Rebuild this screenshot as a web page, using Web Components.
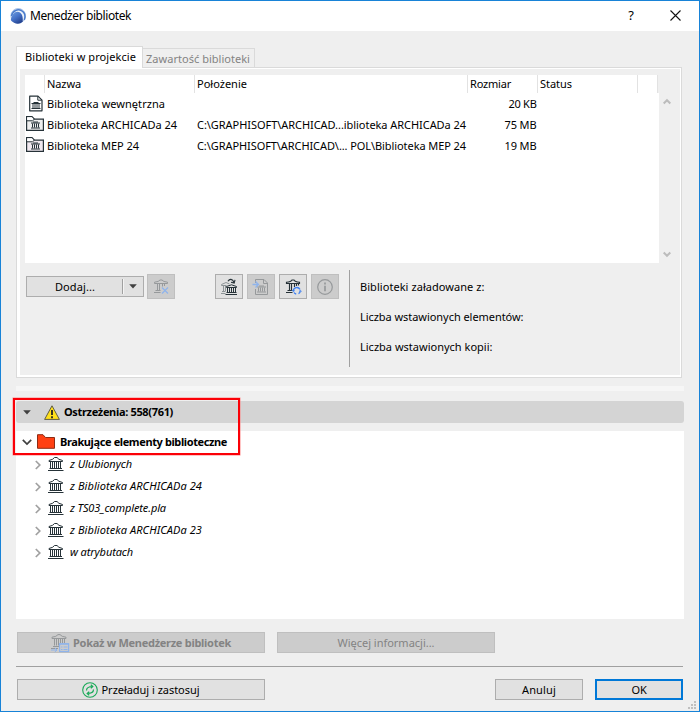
<!DOCTYPE html>
<html lang="pl">
<head>
<meta charset="utf-8">
<title>Menedżer bibliotek</title>
<style>
html,body{margin:0;padding:0;background:#efefef}
body{width:700px;height:712px;overflow:hidden;font:11px "Noto Sans","Open Sans",sans-serif;color:#000}
</style>
</head>
<body>
<library-manager></library-manager>
<script>
const define=(name,html,setup)=>{
  const t=document.createElement('template');
  t.innerHTML=html;
  customElements.define(name,class extends HTMLElement{
    connectedCallback(){
      if(this.shadowRoot)return;
      this.attachShadow({mode:'open'}).append(t.content.cloneNode(true));
      if(setup)setup(this,this.shadowRoot);
    }
  });
};

/* Label tracked to a given width (attribute w, in px). */
define('fit-text',`<style>:host{display:inline-block;white-space:pre;flex:none}span{display:inline-block}</style><span><slot></slot></span>`,(el,root)=>{
  const w=+el.getAttribute('w'),s=root.querySelector('span'),n=el.textContent.length;
  if(!w||!n)return;
  const nat=s.getBoundingClientRect().width;
  s.style.letterSpacing=((w-nat)/n)+'px';
  el.style.width=w+'px';
});

const bank='<path d="M1 4.500V3.500Q5.500 2.500 6.500.5h2.500Q10 2.500 14.500 3.500v1z" fill="none"/><path d="M2.500 4.500v6.500M4.500 4.500v6.500M6.500 4.500v6.500M8.500 4.500v6.500M10.500 4.500v6.500M12.500 4.500v6.500M1.500 11.500h12.500M0 13.500h15.500"/>';
const miniBank='<path d="M0 2.500h9M2 1.500h5M1.500 3v4M3.500 3v4M5.500 3v4M7.500 3v4M0 7.500h9" fill="none"/>';
const pillars='<path d="M1.500 4.500V3.200Q6 2.800 7 1h2q1 1.800 5.500 2.200v1.300zM4.500 4.500v7M6.500 4.500v7M1 13.500h6.500M2.500 11.500h5" fill="none"/>';
const lib=c=>[18,15,`<path d="M.6 14.400V.6H6l2.500 2.500h8.900V14.400z" fill="${c}" stroke="#263238" stroke-width="1.200"/><path d="M1.200 1.200h4.500l1.500 1.600-1 1.200h-5z" fill="#fff"/><path d="M.6 4.800H6.500l2-1.700" fill="none" stroke="#263238"/><g transform="translate(5 4.500)" stroke="#263238">${miniBank}</g>`];
const icons={
  app:[16,16,`<defs><linearGradient id="g" x1="0" y1="0" x2=".7" y2="1"><stop offset="0" stop-color="#6f9fe0"/><stop offset=".5" stop-color="#4774c9"/><stop offset="1" stop-color="#23418f"/></linearGradient></defs><circle cx="8.200" cy="7.800" r="7.300" fill="#eaf1fa" stroke="#8fb2e2" stroke-width=".8"/><path d="M1.500 8C2.500 2.500 8 .5 11.500 2.700c3.500 2 4 6 2.800 9.300" fill="none" stroke="#4a7bcb" stroke-width="1.500"/><path d="M.8 12C1.600 7 4.400 3.800 7.400 3.800c4 0 5.900 4.200 5.300 9.900A7.700 7.700 0 0 1 4 14.700C2.600 14 1.300 13 .8 12z" fill="url(#g)"/>`],
  bank:[16,14,`<g stroke="#263238">${bank}</g>`],
  file:[14,17,`<path d="M.7 1.200H9L13 5.200V15.800H.7z" fill="#fff" stroke="#263238" stroke-width="1.200" stroke-linejoin="round"/><path d="M8.800 1.200v4h4" fill="none" stroke="#263238"/><g transform="translate(2.500 6)" stroke="#263238">${miniBank}</g>`],
  lib:lib('#eee'),
  libPink:lib('#f0e8ef'),
  remove:[16,16,`<g stroke="#96999b">${pillars}<path d="M9.500 4.500v3M11.500 4.500v2.500"/></g><path d="M9 8.500l6 6m0-6l-6 6" stroke="#8fb4ec" stroke-width="1.200"/>`],
  copy:[16,16,`<g stroke="#8d9497" fill="none"><path d="M.5 6.500V5.500L5 3.500 8.500 5M.5 6.500h5M2.500 7v5.500M4.500 7v5.500M0 14.500h4.500M1 12.500h3"/></g><path d="M5.500 8.500V7.500L10.500 5.800l5 1.700v1z" fill="#e2e2e2" stroke="#263238"/><path d="M6.500 8.500v5M8.500 8.500v5M10.500 8.500v5M12.500 8.500v5M14.500 8.500v5M5.500 13.500h10M4.500 15.500h11.500" stroke="#263238"/><path d="M7 2.300C8.500-.4 11.500-.5 13 3.500M10 3.300l3.200.8.800-3.300" fill="none" stroke="#263238" stroke-width="1.100"/>`],
  import:[18,18,`<g stroke="#96999b" fill="none"><path d="M3.500 5V1.500h8.500L15.500 5V16.500H3.500V11M11.500 1.500v4h4"/><g transform="translate(5 6.500)">${miniBank}</g></g><path d="M.5 6.500h6M3.500 3.500l3 3-3 3" fill="none" stroke="#8fb4ec" stroke-width="1.300"/>`],
  reload:[16,16,`<g stroke="#263238" stroke-width="1.150">${pillars}<path d="M9.500 4.500v3.500M11.500 4.500v2.500M13.500 4.500v2"/></g><path d="M8.300 12a3.500 3.500 0 0 1 6.600-1.600M15.400 12.200a3.500 3.500 0 0 1-1.900 2.500M11.200 15a3.500 3.500 0 0 1-2.200-1.500" fill="none" stroke="#3d7ff0" stroke-width="1.300"/><path d="M7 11.300l1.300 1.400 1.500-1.200M14 12.500l1.400-1.300L16.500 12.500" fill="none" stroke="#3d7ff0" stroke-width=".9"/>`],
  info:[16,16,`<circle cx="8" cy="8" r="7.300" fill="none" stroke="#96999b" stroke-width="1.200"/><path d="M8 3.500v2M8 6.800v5.500" stroke="#96999b" stroke-width="1.700"/>`],
  warn:[16,15,`<path d="M8 .8L15.400 14.400H.6z" fill="#ffe01b" stroke="#5f5c45" stroke-linejoin="round"/><path d="M8 5v5M8 11.300v1.900" stroke="#222" stroke-width="1.800"/>`],
  folder:[18,15,`<path d="M.5 14.300V.7H6l2.500 2.800h9V14.300z" fill="#ff4013" stroke="#8d2b14"/>`],
  show:[18,18,`<g stroke="#96999b" fill="none"><path d="M1 4.500V3.200Q5.500 2.800 7 .6h2Q10.500 2.800 15 3.200v1.300zM3.500 4.500v7M5.500 4.500v7M7.500 4.500v7M9.500 4.500v4.500M11.500 4.500v4.500M13.500 4.500v4.500M2 12.500h6M0 14.500h7"/></g><rect x="8.600" y="9.700" width="9" height="7.800" fill="#ccc" stroke="#8fb4ec" stroke-width="1.200"/><path d="M8 10.200h10M10 13h1.500M12.500 13h4M10 15.500h1.500M12.500 15.500h4M0 16h6M3.800 13.800L6 16l-2.200 2" fill="none" stroke="#8fb4ec"/>`],
  refresh:[16,16,`<circle cx="8" cy="8" r="7.300" fill="none" stroke="#18a957" stroke-width="1.100"/><path d="M4.500 8.500c0-3 2-4 6.300-4M8.800 2.700l2 1.800-2 1.800M11.500 7.500c0 3-2 4-6.300 4M7.200 9.700l-2 1.800 2 1.800" fill="none" stroke="#18a957" stroke-width="1.200"/>`],
  caret:[8,5,`<path d="M.2.300h7.600L4 4.600z" fill="#404040"/>`],
  chevD:[10,6,`<path d="M.8.800L5 5 9.200.8" fill="none" stroke="#404040" stroke-width="1.700"/>`],
  chevR:[6,10,`<path d="M.8 1L4.800 5 .8 9" fill="none" stroke="#a0a0a0" stroke-width="1.700"/>`],
  up:[8,7,`<path d="M.7 5.500L4 2.200l3.300 3.300" fill="none" stroke="#bcbcbc" stroke-width="2"/>`],
  down:[8,7,`<path d="M.7 1.500L4 4.800l3.300-3.300" fill="none" stroke="#bcbcbc" stroke-width="2"/>`],
  close:[11,11,`<path d="M.5.500l10 10m0-10l-10 10" stroke="#111" stroke-width="1.100"/>`],
  grip:[9,9,`<path d="M6 0h2v2H6zM3 3h2v2H3zM6 3h2v2H6zM0 6h2v2H0zM3 6h2v2H3zM6 6h2v2H6z" fill="#bfbfbf"/>`]
};
define('ui-icon',`<style>:host{display:block;flex:none}svg{display:block;overflow:visible}</style><div></div>`,(el,root)=>{
  const [w,h,body]=icons[el.getAttribute('name')];
  root.querySelector('div').innerHTML=`<svg width="${w}" height="${h}" viewBox="0 0 ${w} ${h}">${body}</svg>`;
});

define('push-button',`<style>
:host{display:flex;box-sizing:border-box;align-items:center;justify-content:center;height:21px;border:1px solid #adadad;background:#e1e1e1;line-height:19px;flex:none}
:host([disabled]){background:#ccc;border-color:#bfbfbf;color:#838383}
:host([default]){border:2px solid #0078d7}
:host([square]){width:28px;height:25px}
</style><slot></slot>`);

define('title-bar',`<style>
:host{display:flex;height:30px;background:#fff;align-items:center;padding-left:9px;font-size:12px;line-height:16px}
.t{margin-left:4px;flex:1}.q{font-size:13px;margin:-2px 36px 0 0}.x{margin-right:18px;margin-top:-2px}
</style><ui-icon name="app"></ui-icon><div class="t"><slot></slot></div><div class="q">?</div><ui-icon class="x" name="close"></ui-icon>`);

define('tab-strip',`<style>
:host{display:flex;align-items:flex-end;height:21px;position:relative;z-index:1}
div{box-sizing:border-box;border:1px solid #dadada;border-bottom:0}
.a{width:127px;height:22px;margin-bottom:-1px;background:#fff;padding-left:8px;line-height:20px}
.b{width:112px;height:19px;border-left:0;color:#838383;padding-left:3px;line-height:20px}
</style><div class="a"><fit-text w="111">Biblioteki w projekcie</fit-text></div><div class="b"><fit-text w="104">Zawartość biblioteki</fit-text></div>`);

define('library-table',`<style>
:host{display:grid;grid-template-columns:634px 21px;height:188px}
.m{background:#fff}
.h,.r{display:grid;grid-template-columns:20px 150px 273px 70px 100px 20px 1px}
.h{height:18px;line-height:18px}
.h>*{border-right:1px solid #e2e2e2;padding-left:2px;white-space:nowrap}
.h>:last-child{border:0;background:#efefef;padding:0}
.r{height:21px;line-height:21px;align-items:center;white-space:nowrap}
.r>fit-text{margin-left:2px}
.r>.n{justify-self:end;margin-right:1.500px}
.s{display:flex;flex-direction:column;justify-content:space-between;padding:23px 0 5px 3.500px}
</style><div class="m">
<div class="h"><b></b><div><fit-text w="34">Nazwa</fit-text></div><div><fit-text w="50">Położenie</fit-text></div><div><fit-text w="41">Rozmiar</fit-text></div><div><fit-text w="32">Status</fit-text></div><b></b><i></i></div>
<div class="r"><ui-icon name="file" style="margin-left:4px"></ui-icon><fit-text w="118">Biblioteka wewnętrzna</fit-text><span></span><fit-text class="n" w="28">20 KB</fit-text></div>
<div class="r"><ui-icon name="lib" style="margin:-2px 0 0 1px"></ui-icon><fit-text w="130">Biblioteka ARCHICADa 24</fit-text><fit-text w="269">C:\\GRAPHISOFT\\ARCHICAD...iblioteka ARCHICADa 24</fit-text><fit-text class="n" w="32">75 MB</fit-text></div>
<div class="r"><ui-icon name="libPink" style="margin:-2px 0 0 1px"></ui-icon><fit-text w="92">Biblioteka MEP 24</fit-text><fit-text w="269">C:\\GRAPHISOFT\\ARCHICAD\\... POL\\Biblioteka MEP 24</fit-text><fit-text class="n" w="32">19 MB</fit-text></div>
</div><div class="s"><ui-icon name="up"></ui-icon><ui-icon name="down"></ui-icon></div>`);

define('library-toolbar',`<style>
:host{display:flex;padding:7px 0 0 1px;height:97px}
.add{width:118px;margin:6px 3px 0 0;justify-content:flex-start}
.add fit-text{margin-left:28px}
.add i{width:1px;height:15px;background:#a0a0a0;border-right:1px solid #f4f4f4;margin-left:27px}
.add ui-icon{margin-left:5px}
push-button[square]{margin:4px 4px 0 0}
.gap{margin-left:36px!important}
.info{border-left:1px solid #a0a0a0;margin-left:6px;padding:2px 0 0 10px;height:95px;display:flex;flex-direction:column;line-height:30px}
</style>
<push-button class="add"><fit-text w="40">Dodaj...</fit-text><i></i><ui-icon name="caret"></ui-icon></push-button>
<push-button square disabled><ui-icon name="remove"></ui-icon></push-button>
<push-button square class="gap"><ui-icon name="copy"></ui-icon></push-button>
<push-button square disabled><ui-icon name="import"></ui-icon></push-button>
<push-button square><ui-icon name="reload"></ui-icon></push-button>
<push-button square disabled><ui-icon name="info"></ui-icon></push-button>
<div class="info"><fit-text w="124.500">Biblioteki załadowane z:</fit-text><fit-text w="163.500">Liczba wstawionych elementów:</fit-text><fit-text w="132.500">Liczba wstawionych kopii:</fit-text></div>`);

define('warning-header',`<style>
:host{display:flex;align-items:center;height:22px;line-height:22px;background:#d4d4d4;border-radius:3px;font-weight:bold;padding-left:7px}
ui-icon+ui-icon{margin:0 4px 0 13px}
</style><ui-icon name="caret"></ui-icon><ui-icon name="warn"></ui-icon><slot></slot>`);

define('tree-item',`<style>
:host{display:flex;align-items:center;height:22px;line-height:22px;font-style:italic;padding-left:19px}
.c{margin-top:2px}.b{margin:0 6px 0 7px}
</style><ui-icon class="c" name="chevR"></ui-icon><ui-icon class="b" name="bank"></ui-icon><slot></slot>`);

define('missing-tree',`<style>
:host{display:block;height:188px;background:#fff}
.g{display:flex;align-items:center;height:22px;line-height:22px;font-weight:bold;padding-left:6px}
.g ui-icon+ui-icon{margin:-1px 5px 0}
</style><div class="g"><ui-icon name="chevD"></ui-icon><ui-icon name="folder"></ui-icon><fit-text w="167">Brakujące elementy biblioteczne</fit-text></div>
<tree-item><fit-text w="62">z Ulubionych</fit-text></tree-item>
<tree-item><fit-text w="132">z Biblioteka ARCHICADa 24</fit-text></tree-item>
<tree-item><fit-text w="96">z TS03_complete.pla</fit-text></tree-item>
<tree-item><fit-text w="132">z Biblioteka ARCHICADa 23</fit-text></tree-item>
<tree-item><fit-text w="63">w atrybutach</fit-text></tree-item>`);

define('library-manager',`<style>
:host{display:block;box-sizing:border-box;width:700px;height:712px;border:1px solid #1883d7;background:#efefef;position:relative}
.body{padding:15px 15px 0}
.panel{box-sizing:border-box;width:666px;height:311px;border:1px solid #dadada;background:#efefef;box-shadow:inset 3px 1px #fff,inset -1px -2px #fff;padding:7px 0 0 8px}
.split{height:5px;background:#f6f6f6;margin:8px 0 10px}
warning-header{margin-bottom:8px}
.row{display:flex;margin-left:1px}
.line{height:1px;background:#a0a0a0;margin:13px 1px 12px 0}
.mark{position:absolute;left:12px;top:397px;width:223px;height:53px;border:2px solid #fb0007;box-shadow:0 0 0 .5px #ff8a8a}
.grip{position:absolute;right:2px;bottom:1px}
</style>
<title-bar><fit-text w="101">Menedżer bibliotek</fit-text></title-bar>
<div class="body">
<tab-strip></tab-strip>
<div class="panel"><library-table></library-table><library-toolbar></library-toolbar></div>
<div class="split"></div>
<warning-header><fit-text w="109">Ostrzeżenia: 558(761)</fit-text></warning-header>
<missing-tree></missing-tree>
<div class="row" style="margin-top:13px"><push-button disabled style="width:248px;font-weight:bold"><ui-icon name="show" style="margin-right:4px"></ui-icon><fit-text w="158">Pokaż w Menedżerze bibliotek</fit-text></push-button><push-button disabled style="width:218px;margin-left:12px"><fit-text w="97">Więcej informacji...</fit-text></push-button></div>
<div class="line"></div>
<div class="row"><push-button style="width:248px"><ui-icon name="refresh" style="margin:0 4px 0 -1px"></ui-icon><fit-text w="98">Przeładuj i zastosuj</fit-text></push-button><push-button style="width:88px;margin-left:230px"><fit-text w="34">Anuluj</fit-text></push-button><push-button default style="width:88px;margin-left:12px"><fit-text w="15">OK</fit-text></push-button></div>
</div>
<div class="mark"></div><ui-icon class="grip" name="grip"></ui-icon>`);
</script>
</body>
</html>
